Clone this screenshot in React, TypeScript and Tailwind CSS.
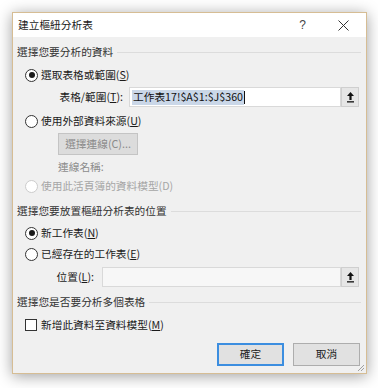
import React from "react";

const font = { fontFamily: '"Noto Sans CJK TC", "Noto Sans", "Liberation Sans", sans-serif' };

function Radio({ checked, disabled }: { checked?: boolean; disabled?: boolean }) {
  return (
    <span
      className={`w-[13px] h-[13px] rounded-full border flex items-center justify-center bg-white shrink-0 ${
        disabled ? "border-[#cccccc]" : "border-[#333333]"
      }`}
    >
      {checked && <span className="w-[6px] h-[6px] rounded-full bg-[#1a1a1a]" />}
    </span>
  );
}

function SectionHeader({ text, mt }: { text: string; mt: string }) {
  return (
    <div className={`flex items-center h-[20px] pl-[4px] pr-[5px] ${mt}`}>
      <span className="text-[#333333] whitespace-nowrap">{text}</span>
      <span className="flex-1 h-px bg-[#dcdcdc] ml-[4px]" />
    </div>
  );
}

function UpButton() {
  return (
    <div className="w-[18px] h-[20px] bg-[#e6e6e6] border border-[#cfcfcf] flex items-center justify-center">
      <svg width="9" height="12" viewBox="0 0 9 12">
        <path d="M4.5 1 L8 5 L5.6 5 L5.6 9 L3.4 9 L3.4 5 L1 5 Z" fill="#111" />
        <rect x="1" y="10.2" width="7" height="1.3" fill="#111" />
      </svg>
    </div>
  );
}

function U({ c }: { c: string }) {
  return <span className="underline underline-offset-[1px]">{c}</span>;
}

export default function App() {
  return (
    <div className="w-[378px] h-[388px] bg-white pt-[12px] pl-[12px] overflow-hidden" style={font}>
      <div className="w-[355px] h-[362px] border border-[#d6bd94] bg-[#f0f0f0] shadow-[0_2px_14px_rgba(0,0,0,0.38)] flex flex-col text-[10.7px] leading-none text-[#1a1a1a] relative">
        {/* title bar */}
        <div className="h-[24px] bg-white flex items-center pl-[5px] shrink-0">
          <span className="text-[#1a1a1a]">建立樞紐分析表</span>
          <span className="ml-auto mr-[32px] text-[#444] text-[12px]" style={{ fontFamily: '"Liberation Sans", sans-serif' }}>?</span>
          <svg width="11" height="11" viewBox="0 0 11 11" className="mr-[17px]">
            <path d="M0.5 0.5 L10.5 10.5 M10.5 0.5 L0.5 10.5" stroke="#333" strokeWidth="1" />
          </svg>
        </div>

        <SectionHeader text="選擇您要分析的資料" mt="mt-[5px]" />

        <div className="flex items-center h-[20px] mt-[3px] pl-[12px]">
          <Radio checked />
          <span className="ml-[3px]">選取表格或範圍(<U c="S" />)</span>
        </div>

        <div className="flex items-center h-[20px] mt-[2px]">
          <span className="w-[111px] text-right pr-[1px]">表格/範圍(<U c="T" />):</span>
          <div className="ml-[5px] w-[212px] h-[20px] bg-white border border-[#d9d9d9] flex items-center pl-[2px]">
            <span className="bg-[#cad7e8] h-[15px] flex items-center px-[1px] text-[#111]">工作表17!$A$1:$J$360</span>
            <span className="w-px h-[13px] bg-[#111]" />
          </div>
          <UpButton />
        </div>

        <div className="flex items-center h-[20px] mt-[4px] pl-[12px]">
          <Radio />
          <span className="ml-[3px]">使用外部資料來源(<U c="U" />)</span>
        </div>

        <div className="mt-[2px] pl-[45px]">
          <div className="w-[80px] h-[22px] bg-[#dcdcdc] border border-[#c4c4c4] flex items-center justify-center text-[#8a8a8a]">
            選擇連線(C)...
          </div>
        </div>

        <div className="flex items-center h-[18px] mt-[3px] pl-[45px] text-[#8c8c8c]">連線名稱:</div>

        <div className="flex items-center h-[18px] mt-[1px] pl-[12px] text-[#a6a6a6]">
          <Radio disabled />
          <span className="ml-[3px]">使用此活頁簿的資料模型(D)</span>
        </div>

        <SectionHeader text="選擇您要放置樞紐分析表的位置" mt="mt-[6px]" />

        <div className="flex items-center h-[20px] mt-[2px] pl-[12px]">
          <Radio checked />
          <span className="ml-[3px]">新工作表(<U c="N" />)</span>
        </div>

        <div className="flex items-center h-[20px] mt-[1px] pl-[12px]">
          <Radio />
          <span className="ml-[3px]">已經存在的工作表(<U c="E" />)</span>
        </div>

        <div className="flex items-center h-[20px] mt-[3px]">
          <span className="w-[82px] text-right pr-[1px]">位置(<U c="L" />):</span>
          <div className="ml-[7px] w-[239px] h-[20px] bg-[#f7f7f7] border border-[#d9d9d9]" />
          <UpButton />
        </div>

        <SectionHeader text="選擇您是否要分析多個表格" mt="mt-[5px]" />

        <div className="flex items-center h-[20px] mt-[3px] pl-[12px]">
          <span className="w-[12px] h-[12px] border border-[#333] bg-white shrink-0" />
          <span className="ml-[4px]">新增此資料至資料模型(<U c="M" />)</span>
        </div>

        <div className="flex justify-end gap-[9px] mt-[8px] pr-[6px]">
          <div className="w-[67px] h-[23px] bg-[#e1e1e1] border-2 border-[#3c8ee0] flex items-center justify-center">確定</div>
          <div className="w-[67px] h-[23px] bg-[#e1e1e1] border border-[#adadad] flex items-center justify-center">取消</div>
        </div>

        <svg width="8" height="8" viewBox="0 0 8 8" className="absolute right-[1px] bottom-[1px]">
          <path d="M7 1 L1 7 M7 4 L4 7" stroke="#a0a0a0" strokeWidth="1" />
        </svg>
      </div>
    </div>
  );
}
